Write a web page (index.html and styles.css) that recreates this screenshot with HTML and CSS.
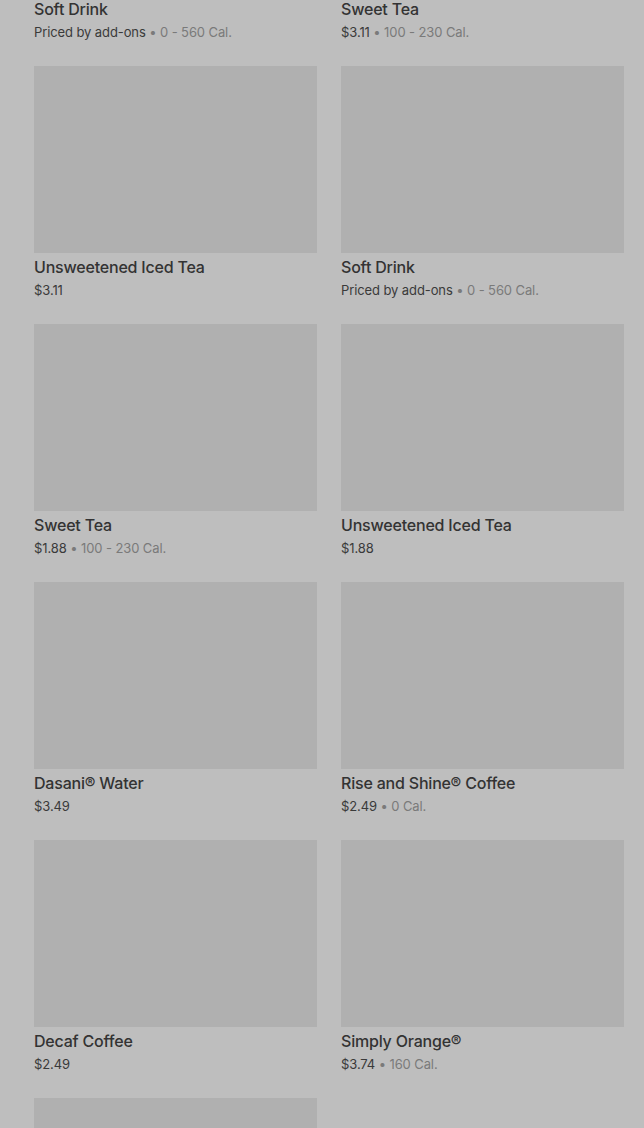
FILE: index.html
```html
<!DOCTYPE html>
<html lang="en">
<head>
  <meta charset="UTF-8" />
  <meta name="viewport" content="width=device-width, initial-scale=1.0"/>
  <title>Beverages</title>
  <link rel="stylesheet" href="styles.css">
</head>
<body>
  <div class="menu">
    <div class="item">
      <div class="photo"></div>
      <h3>Soft Drink</h3>
      <p class="meta">Priced by add-ons <span class="cal">• 0 - 560 Cal.</span></p>
    </div>
    <div class="item">
      <div class="photo"></div>
      <h3>Sweet Tea</h3>
      <p class="meta">$3.11 <span class="cal">• 100 - 230 Cal.</span></p>
    </div>

    <div class="item">
      <div class="photo"></div>
      <h3>Unsweetened Iced Tea</h3>
      <p class="meta">$3.11</p>
    </div>
    <div class="item">
      <div class="photo"></div>
      <h3>Soft Drink</h3>
      <p class="meta">Priced by add-ons <span class="cal">• 0 - 560 Cal.</span></p>
    </div>

    <div class="item">
      <div class="photo"></div>
      <h3>Sweet Tea</h3>
      <p class="meta">$1.88 <span class="cal">• 100 - 230 Cal.</span></p>
    </div>
    <div class="item">
      <div class="photo"></div>
      <h3>Unsweetened Iced Tea</h3>
      <p class="meta">$1.88</p>
    </div>

    <div class="item">
      <div class="photo"></div>
      <h3>Dasani® Water</h3>
      <p class="meta">$3.49</p>
    </div>
    <div class="item">
      <div class="photo"></div>
      <h3>Rise and Shine® Coffee</h3>
      <p class="meta">$2.49 <span class="cal">• 0 Cal.</span></p>
    </div>

    <div class="item">
      <div class="photo"></div>
      <h3>Decaf Coffee</h3>
      <p class="meta">$2.49</p>
    </div>
    <div class="item">
      <div class="photo"></div>
      <h3>Simply Orange®</h3>
      <p class="meta">$3.74 <span class="cal">• 160 Cal.</span></p>
    </div>

    <div class="item">
      <div class="photo"></div>
    </div>
  </div>
</body>
</html>
```

FILE: styles.css
```css
* {
  margin: 0;
  padding: 0;
  box-sizing: border-box;
}

body {
  background: #bebebe;
  font-family: Inter, "Noto Sans", sans-serif;
  color: #333;
  height: 1128px;
  overflow: hidden;
}

/* list is scrolled: first row's photos are above the fold */
.menu {
  display: grid;
  grid-template-columns: 283px 283px;
  column-gap: 24px;
  row-gap: 25px;
  padding: 0 20px 0 34px;
  margin-top: -192px;
}

.photo {
  height: 187px;
  background: #b0b0b0;
}

.item h3 {
  margin-top: 4px;
  font-size: 16px;
  line-height: 20px;
  font-weight: 500;
  letter-spacing: -0.2px;
  color: #333;
}

.meta {
  margin-top: 4px;
  font-size: 13px;
  line-height: 18px;
  letter-spacing: -0.1px;
  color: #3a3a3a;
}

.cal {
  color: #7a7a7a;
}
```
